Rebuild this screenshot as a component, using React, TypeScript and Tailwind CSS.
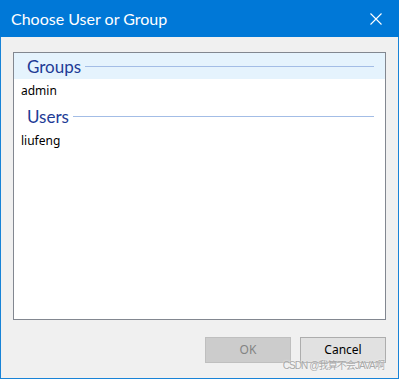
const sections = [
  { title: 'Groups', items: ['admin'], selected: true },
  { title: 'Users', items: ['liufeng'], selected: false },
]

const App = () => {
  return (
    <div className="relative w-[399px] h-[379px] flex flex-col bg-[#f0f0f0] font-['Noto_Sans',sans-serif]">
      {/* Title bar */}
      <div className="h-[37px] bg-[#0078d7] flex items-center justify-between pl-[11px] pr-[17px] text-white">
        <span className="text-[16px] leading-none mt-[1px] font-['Lato',sans-serif]">Choose User or Group</span>
        <svg width="12" height="12" viewBox="0 0 12 12" className="mt-[1px]">
          <path d="M0.5 0.5 L11.5 11.5 M11.5 0.5 L0.5 11.5" stroke="white" strokeWidth="1.1" fill="none" />
        </svg>
      </div>

      {/* Body */}
      <div className="flex-1 flex flex-col border-x border-b border-[#1883d7] px-[12px] pt-[15px] pb-[15px]">
        <div className="flex-1 border border-[#828790] bg-white">
          {sections.map(section => (
            <div key={section.title}>
              <div
                className={`h-[26px] flex items-center pl-[13px] pr-[11px] ${
                  section.selected ? 'bg-[#e5f3fd]' : ''
                }`}
              >
                <span className="text-[17px] leading-none text-[#1e3b96] font-['Lato',sans-serif]">{section.title}</span>
                <div className="flex-1 ml-[4px] h-px bg-[#a3bde6]" />
              </div>
              {section.items.map(item => (
                <div key={item} className="h-[24px] flex items-center pl-[7px] text-[12px] text-black">
                  {item}
                </div>
              ))}
            </div>
          ))}
        </div>

        {/* Buttons */}
        <div className="mt-[17px] flex justify-end gap-[9px]">
          <button
            disabled
            className="w-[86px] h-[26px] border border-[#bfbfbf] bg-[#cccccc] text-[12px] text-[#838383]"
          >
            OK
          </button>
          <button className="w-[86px] h-[26px] border border-[#adadad] bg-[#e1e1e1] text-[12px] text-black">
            Cancel
          </button>
        </div>
      </div>

      {/* Watermark */}
      <span className="absolute right-[15px] bottom-[8px] text-[10px] leading-none tracking-[-0.9px] text-[#a8a8a8] [text-shadow:0_0_2px_#fff] font-['Liberation_Sans','Noto_Sans_CJK_SC',sans-serif]">
        CSDN @我算不会JAVA啊
      </span>
    </div>
  )
}

export default App
